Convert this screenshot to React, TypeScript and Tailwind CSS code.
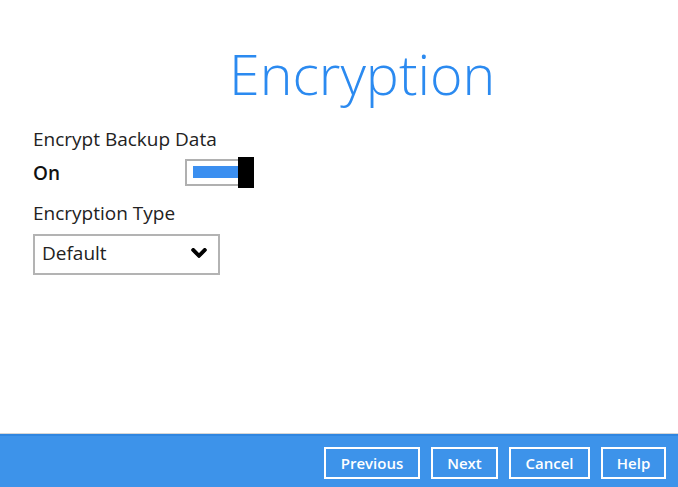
import React from "react";

const font = { fontFamily: '"Open Sans", "Noto Sans", sans-serif' };

function Btn({ label, w }: { label: string; w: string }) {
  return (
    <div
      className={`${w} h-[32px] border-2 border-white flex items-center justify-center text-white text-[15px] font-semibold`}
    >
      {label}
    </div>
  );
}

export default function App() {
  return (
    <div
      className="w-[678px] h-[487px] bg-white flex flex-col overflow-hidden"
      style={font}
    >
      <div className="flex-1 flex flex-col">
        <div className="pt-[36px] pl-[229px] h-[126px]">
          <div className="text-[55.5px] leading-[76px] font-light text-[#2b8af0]">
            Encryption
          </div>
        </div>
        <div className="pl-[33px] flex flex-col">
          <div className="text-[19px] leading-[26px] text-[#222]">
            Encrypt Backup Data
          </div>
          <div className="flex items-center mt-[5px] h-[31px]">
            <div className="w-[152px] text-[19px] leading-[26px] font-semibold text-[#111]">
              On
            </div>
            <div className="relative w-[69px] h-[31px]">
              <div className="absolute left-0 top-[2px] w-[67px] h-[27px] border-2 border-[#b0b0b0] bg-white" />
              <div className="absolute left-[8px] top-[9px] w-[46px] h-[12px] bg-[#3b8ff0]" />
              <div className="absolute left-[53px] top-0 w-[16px] h-[31px] bg-black" />
            </div>
          </div>
          <div className="text-[19px] leading-[26px] text-[#222] mt-[12px]">
            Encryption Type
          </div>
          <div className="mt-[8px] w-[187px] h-[41px] border-2 border-[#b3b3b3] flex items-center justify-between pl-[7px] pr-[11px] pb-[3px]">
            <span className="text-[19px] leading-[26px] text-[#222]">Default</span>
            <svg width="16" height="10" viewBox="-15 108 478 300">
              <path
                d="M207.029 381.476L12.686 187.132c-9.373-9.373-9.373-24.569 0-33.941l22.667-22.667c9.357-9.357 24.522-9.375 33.901-.04L224 284.505l154.745-154.021c9.379-9.335 24.544-9.317 33.901.04l22.667 22.667c9.373 9.373 9.373 24.569 0 33.941L240.971 381.476c-9.373 9.372-24.569 9.372-33.942 0z"
                fill="#000"
                stroke="#000"
                strokeWidth="36"
                strokeLinejoin="round"
              />
            </svg>
          </div>
        </div>
      </div>
      <div className="h-[54px] bg-[#3d93ea] border-t border-[#d6d6d6] flex flex-col">
        <div className="h-[2px] bg-[#2f86e0]" />
        <div className="flex-1 flex items-start justify-end gap-[11px] pr-[12px] pt-[11px]">
          <Btn label="Previous" w="w-[96px]" />
          <Btn label="Next" w="w-[67px]" />
          <Btn label="Cancel" w="w-[81px]" />
          <Btn label="Help" w="w-[65px]" />
        </div>
      </div>
    </div>
  );
}
